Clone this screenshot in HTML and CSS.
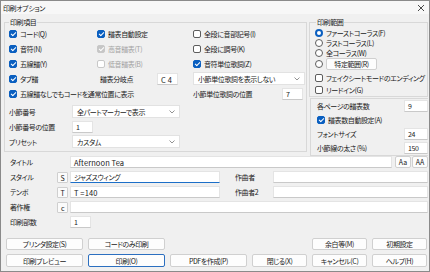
FILE: index.html
```html
<!DOCTYPE html>
<html>
<head>
<meta charset="utf-8">
<title>印刷オプション</title>
<link rel="stylesheet" href="styles.css">
</head>
<body>
<div class="win">
    <div class="titlebar">
        <span class="ttl">印刷オプション</span>
        <svg class="close" width="8" height="8" viewBox="0 0 8 8"><path d="M1 1L7 7M7 1L1 7" stroke="#333" stroke-width="0.9"/></svg>
    </div>

    <div class="top">
        <fieldset class="grp items">
            <legend>印刷項目</legend>
            <div class="checks">
                <label class="ck"><i class="cb on"></i>コード(Q)</label>
                <label class="ck"><i class="cb on"></i>譜表自動設定</label>
                <label class="ck"><i class="cb"></i>全段に音部記号(I)</label>

                <label class="ck"><i class="cb on"></i>音符(N)</label>
                <label class="ck off"><i class="cb on"></i>高音譜表(T)</label>
                <label class="ck"><i class="cb"></i>全段に調号(K)</label>

                <label class="ck"><i class="cb on"></i>五線譜(Y)</label>
                <label class="ck off"><i class="cb"></i>低音譜表(B)</label>
                <label class="ck"><i class="cb on"></i>音符単位歌詞(Z)</label>

                <label class="ck"><i class="cb on"></i>タブ譜</label>
                <div class="split"><span class="lbl57">譜表分岐点</span><span class="in w21 latin">C 4</span></div>
                <div class="sel w112">小節単位歌詞を表示しない<svg width="6" height="4" viewBox="0 0 6 4"><polyline points="0.5,0.5 3,3 5.5,0.5" fill="none" stroke="#777" stroke-width="0.8"/></svg></div>

                <label class="ck span2"><i class="cb on"></i>五線譜なしでもコードを通常位置に表示</label>
                <div class="split pos"><span class="lbl89">小節単位歌詞の位置</span><span class="in w21">7</span></div>
            </div>
            <div class="opts">
                <span>小節番号</span>
                <div class="sel w108">全パートマーカーで表示<svg width="6" height="4" viewBox="0 0 6 4"><polyline points="0.5,0.5 3,3 5.5,0.5" fill="none" stroke="#777" stroke-width="0.8"/></svg></div>
                <span>小節番号の位置</span>
                <div><span class="in w21">1</span></div>
                <span>プリセット</span>
                <div class="sel w108">カスタム<svg width="6" height="4" viewBox="0 0 6 4"><polyline points="0.5,0.5 3,3 5.5,0.5" fill="none" stroke="#777" stroke-width="0.8"/></svg></div>
            </div>
        </fieldset>

        <div class="side">
            <fieldset class="grp range">
                <legend>印刷範囲</legend>
                <label class="rd"><i class="dot on"></i>ファーストコーラス(F)</label>
                <label class="rd"><i class="dot"></i>ラストコーラス(L)</label>
                <label class="rd"><i class="dot"></i>全コーラス(W)</label>
                <div class="rd tall"><i class="dot"></i><span class="btn mini">特定範囲(R)</span></div>
                <label class="ck row12 first"><i class="cb"></i>フェイクシートモードのエンディング</label>
                <label class="ck row12"><i class="cb"></i>リードイン(G)</label>
            </fieldset>
            <div class="panel">
                <span>各ページの譜表数</span><span class="in w24">9</span>
                <label class="ck wide"><i class="cb on"></i>譜表数自動設定(A)</label>
                <span>フォントサイズ</span><span class="in w24">24</span>
                <span>小節線の太さ (%)</span><span class="in w24">150</span>
            </div>
        </div>
    </div>

    <div class="meta">
        <span>タイトル</span><span></span>
        <div class="line"><span class="in grow latin">Afternoon Tea</span><span class="btn sq">Aa</span><span class="btn sq">AA</span></div>

        <span>スタイル</span><span class="key">S</span>
        <div class="line"><span class="in w150 focus">ジャズスウィング</span><span class="sub">作曲者</span><span class="in grow"></span></div>

        <span>テンポ</span><span class="key">T</span>
        <div class="line"><span class="in w150 latin">T =140</span><span class="sub">作曲者2</span><span class="in grow"></span></div>

        <span>著作権</span><span class="key">c</span>
        <div class="line"><span class="in grow"></span></div>

        <span>印刷部数</span><span></span>
        <div class="line"><span class="in w21">1</span></div>
    </div>

    <div class="btnrow">
        <span class="btn w77">プリンタ設定(S)</span>
        <span class="btn w77">コードのみ印刷</span>
        <span class="btn w55 push">余白等(M)</span>
        <span class="btn w55">初期設定</span>
    </div>
    <div class="btnrow r2">
        <span class="btn w77">印刷プレビュー</span>
        <span class="btn w77 def">印刷(O)</span>
        <span class="btn w77">PDFを作成(P)</span>
        <span class="btn w55">閉じる(X)</span>
        <span class="btn w55">キャンセル(C)</span>
        <span class="btn w55">ヘルプ(H)</span>
    </div>
</div>
</body>
</html>
```

FILE: styles.css
```css
*{
    box-sizing:border-box;
}
body{
    margin:0;
    font-family:"Noto Sans CJK JP", sans-serif;
    font-size:7px;
    letter-spacing:-0.4px;
    font-feature-settings:"palt";
    color:#1a1a1a;
}
.win{
    width:430px;
    height:272px;
    border:1px solid #8a8a8a;
    background:#f0f0f0;
}
.titlebar{
    height:13px;
    background:#f7f7f7;
    display:flex;
    align-items:center;
    padding:0 4px 0 2px;
}
.titlebar .close{
    margin-left:auto;
}

/* group boxes */
.top{
    display:flex;
    align-items:flex-start;
    margin-top:4px;
    padding-left:3px;
}
.grp{
    margin:0;
    min-width:0;
    border:1px solid #d8d8d8;
}
.grp legend{
    padding:0 1px;
    line-height:8px;
}
.items{
    width:303px;
    padding:0 4px 2px 4px;
}
.checks{
    display:grid;
    grid-template-columns:88px 96px 112px;
    grid-auto-rows:15px;
    align-items:center;
}
.ck{
    display:flex;
    align-items:center;
    white-space:nowrap;
}
.ck.off{
    color:#a3a3a3;
}
.span2{
    grid-column:span 2;
}
.cb{
    position:relative;
    width:8px;
    height:8px;
    margin-right:3px;
    border:1px solid #5d5d5d;
    border-radius:2px;
    background:#fff;
    flex:none;
}
.cb.on{
    background:#0a5fc0;
    border-color:#0a5fc0;
}
.cb.on::after{
    content:"";
    position:absolute;
    left:2px;
    top:0;
    width:2px;
    height:4px;
    border:solid #fff;
    border-width:0 1.1px 1.1px 0;
    transform:rotate(45deg);
}
.off .cb{
    border-color:#c8c8c8;
}
.off .cb.on{
    background:#c6c6c6;
}
.split{
    display:flex;
    align-items:center;
    padding-left:3px;
}
.split.pos{
    padding-left:0;
}
.lbl57{
    width:57px;
}
.lbl89{
    width:89px;
}
.opts{
    display:grid;
    grid-template-columns:63px 1fr;
    grid-auto-rows:15px;
    align-items:center;
    margin-top:3px;
}

/* inputs */
.in{
    display:block;
    height:12px;
    line-height:11px;
    padding:0 3px;
    background:#fff;
    border:1px solid #e4e4e4;
    border-bottom-color:#c9c9c9;
    white-space:nowrap;
    overflow:hidden;
}
.in.focus{
    border-bottom:1px solid #1c6fc8;
}
.latin{
    font-size:7.5px;
    letter-spacing:0.1px;
}
.w21{ width:21px; }
.w24{ width:24px; }
.w150{ width:150px; }
.grow{ flex:1; }
.sel{
    display:flex;
    align-items:center;
    height:13px;
    padding:0 4px;
    background:#fff;
    border:1px solid #e2e2e2;
    white-space:nowrap;
}
.sel svg{
    margin-left:auto;
}
.w112{ width:112px; }
.w108{ width:108px; }

/* right side */
.side{
    width:119px;
    margin-left:2px;
}
.range{
    width:119px;
    padding:2px 4px 0 5px;
}
.range legend{
    margin-left:1px;
}
.rd{
    display:flex;
    align-items:center;
    height:10px;
}
.rd.tall{
    height:12px;
}
.dot{
    width:8px;
    height:8px;
    margin-right:3px;
    border:1px solid #5d5d5d;
    border-radius:50%;
    background:#fff;
    flex:none;
}
.dot.on{
    border:2.5px solid #0a5fc0;
}
.row12{
    height:12px;
}
.row12.first{
    margin-top:2px;
}
.panel{
    width:118px;
    margin:1px 0 0 1px;
    padding-left:6px;
    border:1px solid #d8d8d8;
    border-right:none;
    display:grid;
    grid-template-columns:1fr 24px;
    grid-auto-rows:14px;
    align-items:center;
}
.panel .wide{
    grid-column:span 2;
}

/* title / composer block */
.meta{
    display:grid;
    grid-template-columns:47px 13px 1fr;
    grid-auto-rows:12px;
    row-gap:3px;
    align-items:center;
    padding:0 1px 0 9px;
}
.line{
    display:flex;
    height:12px;
}
.key{
    width:11px;
    height:11px;
    line-height:10px;
    text-align:center;
    background:#fbfbfb;
    border:1px solid #cfcfcf;
    border-radius:1px;
}
.sub{
    width:38px;
    margin-left:15px;
    line-height:12px;
}
.btn{
    display:inline-flex;
    align-items:center;
    justify-content:center;
    background:#fdfdfd;
    border:1px solid #d0d0d0;
    border-radius:2px;
    white-space:nowrap;
}
.btn.sq{
    width:16px;
    margin-left:3px;
    letter-spacing:0;
}
.btn.sq + .btn.sq{
    margin-left:1px;
}
.btn.mini{
    width:51px;
    height:12px;
}

/* bottom buttons */
.btnrow{
    display:flex;
    gap:5px;
    height:12px;
    margin-top:10px;
    padding:0 2px 0 5px;
}
.btnrow.r2{
    height:13px;
    margin-top:4px;
}
.w77{ width:77px; }
.w55{ width:55px; }
.push{
    margin-left:auto;
}
.btn.def{
    border-color:#2b6fc0;
}
```
